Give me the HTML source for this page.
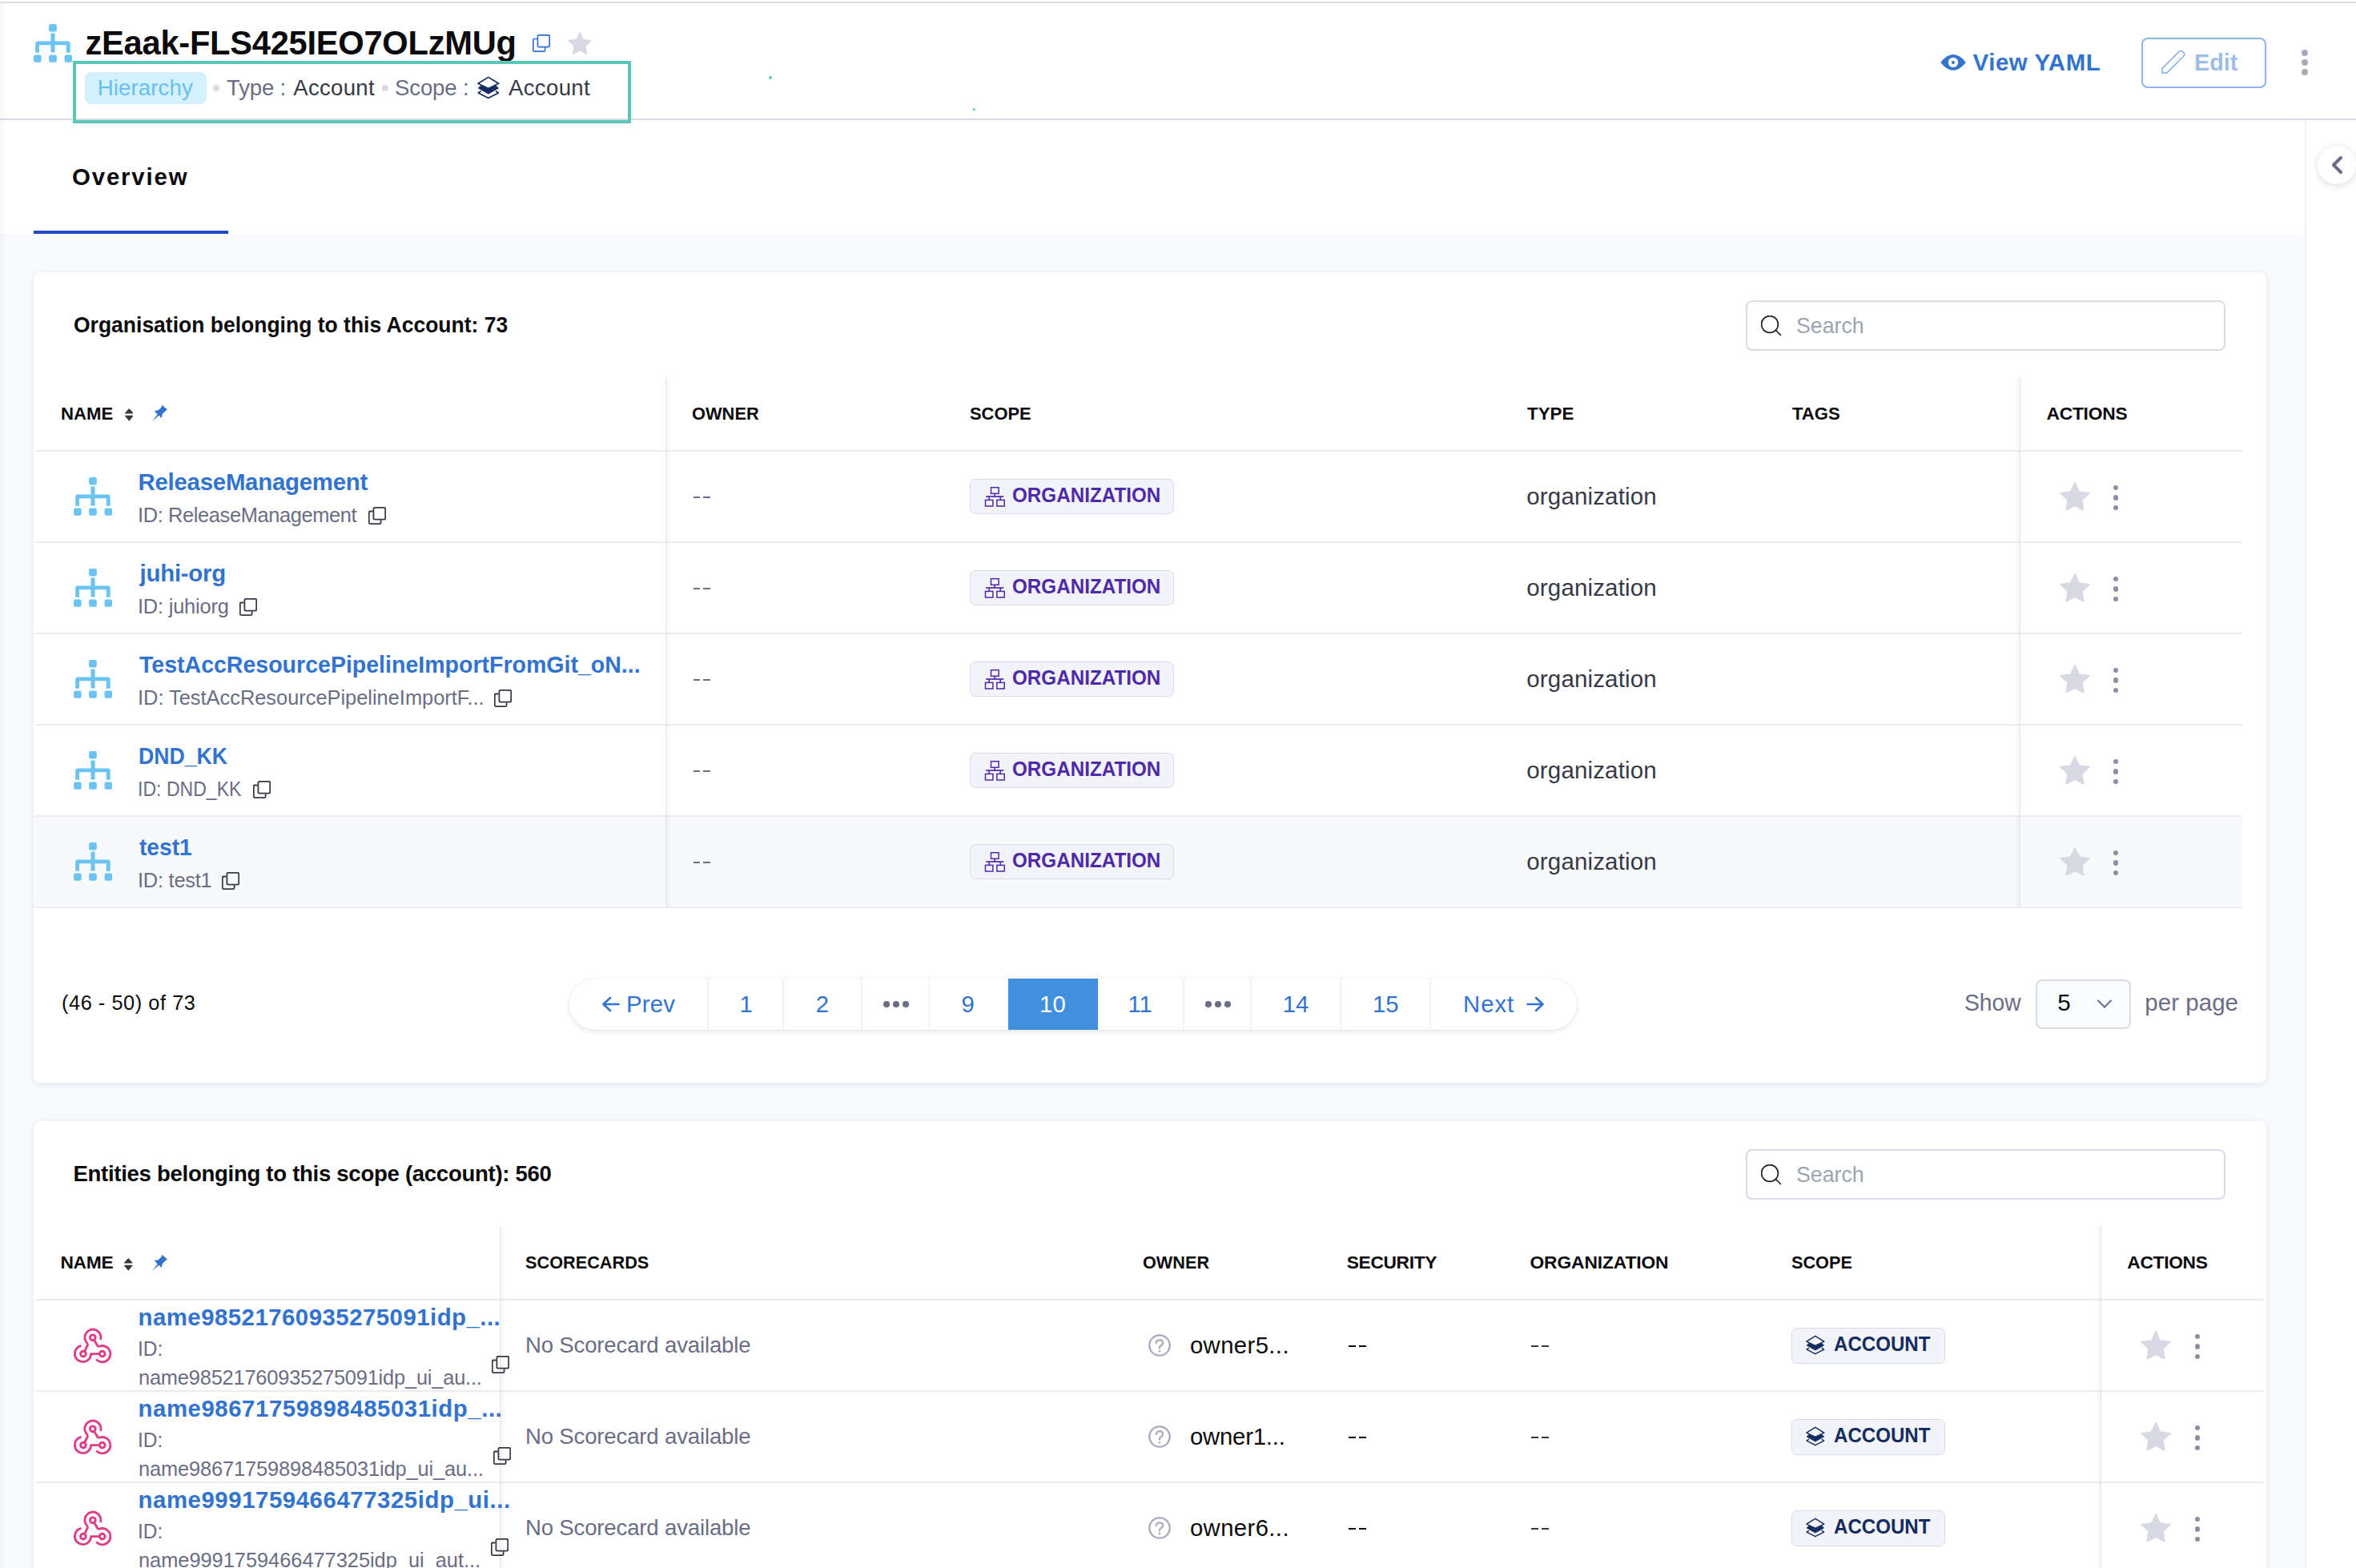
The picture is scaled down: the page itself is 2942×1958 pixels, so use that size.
<!DOCTYPE html>
<html><head><meta charset="utf-8"><title>Hierarchy</title>
<style>
html,body{margin:0;padding:0;}
body{width:2942px;height:1958px;overflow:hidden;position:relative;background:#fff;font-family:"Liberation Sans", sans-serif;}
.t{position:absolute;white-space:nowrap;line-height:1;font-family:"Liberation Sans", sans-serif;}
.r{position:absolute;display:block;}
</style></head><body>
<div class="r" style="left:0.00px;top:292.00px;width:2878.00px;height:1666.00px;background:#f9fafe"></div>
<div class="r" style="left:0.00px;top:2.00px;width:2942.00px;height:2.00px;background:#dddfdd"></div>
<div class="r" style="left:0.00px;top:148.00px;width:2942.00px;height:2.00px;background:#d9dae5"></div>
<div class="r" style="left:2878.00px;top:150.00px;width:1.50px;height:1808.00px;background:#efeff4"></div>
<div class="r" style="left:0.00px;top:4.00px;width:9.00px;height:1954.00px;background:linear-gradient(to right, rgba(40,41,61,0.03), rgba(40,41,61,0))"></div>
<svg class="r" style="left:42.00px;top:30.00px;" width="48.00" height="48.00" viewBox="0 0 48 48"><g fill="#6ac3f0"><rect x="19.1" y="0.1" width="9.7" height="9.4" rx="2"/><rect x="21.5" y="11.5" width="5" height="24"/><path d="M2.2 35.7V24.4q0-3 3-3H42.7q3 0 3 3V35.7H40.8V26.3H7V35.7Z"/><rect x="0.1" y="38.4" width="9.5" height="9.4" rx="2"/><rect x="19.1" y="38.4" width="9.7" height="9.4" rx="2"/><rect x="38.6" y="38.4" width="9.4" height="9.4" rx="2"/></g></svg>
<div id="t1" class="t" style="left:106.50px;top:32.50px;font-size:41.70px;color:#0b0b0d;font-weight:700;letter-spacing:-0.283px;">zEaak-FLS425IEO7OLzMUg</div>
<svg class="r" style="left:664.50px;top:42.80px;" width="22.00" height="22.00" viewBox="0 0 22 22"><g fill="none" stroke="#2f6fd0" stroke-width="1.70"><path d="M5.6 5.5H2.2q-1.4 0-1.4 1.4V19.7q0 1.4 1.4 1.4H14.2q1.4 0 1.4-1.4V16.2"/><rect x="6.4" y="0.8" width="14.8" height="14.8" rx="1.6"/></g></svg>
<svg class="r" style="left:709.00px;top:40.10px;" width="30.00" height="28.00" viewBox="0 0 30 28"><path fill="#d9d9e4" d="M15 0.2L19.3 9.3L29.5 10.7L22.1 17.8L23.9 28L15 23.2L6.1 28L7.9 17.8L0.5 10.7L10.7 9.3Z" stroke="#d9d9e4" stroke-width="1" stroke-linejoin="round"/></svg>
<div class="r" style="left:91.00px;top:76.00px;width:697.00px;height:78.00px;border:4px solid #5bc6b6;box-sizing:border-box"></div>
<div class="r" style="left:106.00px;top:90.00px;width:151.50px;height:39.50px;background:#d4f0fb;border-radius:8px"></div>
<div id="t2" class="t" style="left:121.80px;top:95.64px;font-size:27.60px;color:#66c1ef;letter-spacing:0.104px;">Hierarchy</div>
<div class="r" style="left:266.00px;top:106.00px;width:8.00px;height:8.00px;background:#d9dae5;border-radius:50%"></div>
<div id="t3" class="t" style="left:283.00px;top:95.64px;font-size:27.60px;color:#6b6d85;letter-spacing:-0.198px;">Type :</div>
<div id="t4" class="t" style="left:366.20px;top:95.64px;font-size:27.60px;color:#383946;letter-spacing:0.294px;">Account</div>
<div class="r" style="left:476.50px;top:106.00px;width:8.00px;height:8.00px;background:#d9dae5;border-radius:50%"></div>
<div id="t5" class="t" style="left:493.00px;top:95.64px;font-size:27.60px;color:#6b6d85;letter-spacing:-0.151px;">Scope :</div>
<svg class="r" style="left:596.00px;top:95.00px;" width="28.00" height="29.00" viewBox="0 0 28 29"><g fill="none" stroke="#142d60" stroke-width="1.70" stroke-linejoin="round"><path d="M13.8 1.4L1 9.3L13.8 15.6L26.6 9.3Z"/><path d="M4.6 18.8L1.3 21L13.8 27.5L26.4 21L23 18.8"/></g><path fill="#142d60" stroke="#142d60" stroke-width="1" stroke-linejoin="round" d="M1.3 15L4.9 11.8L13.8 15.9L22.8 11.8L26.4 15L13.8 22.2Z"/></svg>
<div id="t6" class="t" style="left:635.00px;top:95.64px;font-size:27.60px;color:#383946;letter-spacing:0.327px;">Account</div>
<div class="r" style="left:959.90px;top:95.20px;width:4.00px;height:4.00px;background:#5bc5b6;border-radius:50%"></div>
<div class="r" style="left:1214.60px;top:134.60px;width:3.40px;height:3.40px;background:#5bc5b6;border-radius:50%"></div>
<svg class="r" style="left:2423.00px;top:68.00px;" width="32.00" height="20.00" viewBox="0 0 32 20"><path fill="#3273d0" d="M0.3 10Q8 0 16 0Q24 0 31.8 10Q24 19.8 16 19.8Q8 19.8 0.3 10Z"/><circle cx="16" cy="10" r="6.2" fill="#fff"/><circle cx="16" cy="10" r="2" fill="#3273d0"/></svg>
<div id="t7" class="t" style="left:2463.60px;top:62.91px;font-size:29.40px;color:#3273d0;font-weight:700;letter-spacing:0.547px;">View YAML</div>
<div class="r" style="left:2673.50px;top:46.50px;width:156.00px;height:63.00px;border:2px solid #8db5e8;border-radius:8px;box-sizing:border-box"></div>
<svg class="r" style="left:2699.00px;top:63.00px;" width="30.00" height="30.00" viewBox="0 0 30 30"><path fill="none" stroke="#8db5e8" stroke-width="1.7" stroke-linejoin="round" d="M1 22.3L22.6 0.9Q24.2 -0.2 25.8 0.9L28.3 3.4Q29.3 5 28.3 6.5L6.8 28.2H1Z"/><path d="M14 16.5L23 7.5" stroke="#e3ecf8" stroke-width="1.2"/></svg>
<div id="t8" class="t" style="left:2739.52px;top:62.91px;font-size:29.40px;color:#9dbde8;font-weight:700;transform:scaleX(0.9777);transform-origin:0 0;">Edit</div>
<div class="r" style="left:2873.80px;top:61.80px;width:8.40px;height:8.40px;border-radius:50%;background:#a9a9bc"></div>
<div class="r" style="left:2873.80px;top:73.80px;width:8.40px;height:8.40px;border-radius:50%;background:#a9a9bc"></div>
<div class="r" style="left:2873.80px;top:85.80px;width:8.40px;height:8.40px;border-radius:50%;background:#a9a9bc"></div>
<div class="r" style="left:2893.60px;top:182.00px;width:48.00px;height:48.00px;background:#fff;border-radius:50%;box-shadow:0 2px 10px rgba(40,41,61,0.16)"></div>
<svg class="r" style="left:2908.00px;top:194.00px;" width="20.00" height="24.00" viewBox="0 0 20 24"><path d="M15 3L6 12L15 21" fill="none" stroke="#6b6d85" stroke-width="4" stroke-linecap="round" stroke-linejoin="round"/></svg>
<div id="t9" class="t" style="left:90.10px;top:206.01px;font-size:29.40px;color:#0b0b0d;font-weight:700;letter-spacing:1.822px;">Overview</div>
<div class="r" style="left:42.00px;top:288.00px;width:243.00px;height:4.00px;background:#1f48c4"></div>
<div class="r" style="left:42.00px;top:340.00px;width:2788.00px;height:1012.00px;background:#fff;border-radius:8px;box-shadow:0 0 1px rgba(40,41,61,0.06),0 2px 8px rgba(96,97,112,0.14)"></div>
<div id="t10" class="t" style="left:91.74px;top:391.54px;font-size:27.60px;color:#0b0b0d;font-weight:700;transform:scaleX(0.9602);transform-origin:0 0;">Organisation belonging to this Account: 73</div>
<div class="r" style="left:2180.00px;top:374.50px;width:599.00px;height:63.00px;border:2px solid #d9dae5;border-radius:8px;box-sizing:border-box;background:#fff"></div>
<svg class="r" style="left:2199.40px;top:393.50px;" width="26.00" height="26.00" viewBox="0 0 26 26"><circle cx="11" cy="11" r="10.4" fill="none" stroke="#22222a" stroke-width="1.7"/><path d="M18.5 18.5L24.5 24.5" stroke="#22222a" stroke-width="1.7" stroke-linecap="round"/></svg>
<div id="t11" class="t" style="left:2242.52px;top:392.71px;font-size:27.40px;color:#9ba5b2;transform:scaleX(0.9757);transform-origin:0 0;">Search</div>
<div id="t12" class="t" style="left:76.33px;top:504.60px;font-size:22.80px;color:#0b0b0d;font-weight:700;transform:scaleX(0.9709);transform-origin:0 0;">NAME</div>
<svg class="r" style="left:155.50px;top:510.00px;" width="10.50" height="16.00" viewBox="0 0 10.5 16"><path fill="#383946" d="M5.25 0.8L9.8 6H0.7Z M0.7 9.4H9.8L5.25 14.8Z" stroke="#383946" stroke-width="1.2" stroke-linejoin="round"/></svg>
<svg class="r" style="left:190.00px;top:505.00px;" width="20.00" height="22.00" viewBox="0 0 20 22"><path fill="#3273d0" d="M12.3 0.8L19 6.6L16.3 8.4L12.8 12.1L11.7 17L8.4 13.8L0.2 20.9L6.6 12.4L2.8 8.1L7.8 7.2L11.5 3.5Z"/></svg>
<div id="t13" class="t" style="left:864.30px;top:504.60px;font-size:22.80px;color:#0b0b0d;font-weight:700;transform:scaleX(0.9584);transform-origin:0 0;">OWNER</div>
<div id="t14" class="t" style="left:1211.00px;top:504.60px;font-size:22.80px;color:#0b0b0d;font-weight:700;transform:scaleX(0.9610);transform-origin:0 0;">SCOPE</div>
<div id="t15" class="t" style="left:1906.50px;top:504.60px;font-size:22.80px;color:#0b0b0d;font-weight:700;transform:scaleX(0.9792);transform-origin:0 0;">TYPE</div>
<div id="t16" class="t" style="left:2237.50px;top:504.60px;font-size:22.80px;color:#0b0b0d;font-weight:700;transform:scaleX(0.9686);transform-origin:0 0;">TAGS</div>
<div id="t17" class="t" style="left:2555.40px;top:504.60px;font-size:22.80px;color:#0b0b0d;font-weight:700;letter-spacing:-0.213px;">ACTIONS</div>
<div class="r" style="left:42.00px;top:1019.00px;width:2758.00px;height:114.00px;background:#f8f9fb"></div>
<div class="r" style="left:43.50px;top:561.70px;width:2756.50px;height:2.40px;background:#ececf3"></div>
<div class="r" style="left:43.50px;top:675.70px;width:2756.50px;height:2.40px;background:#ececf3"></div>
<div class="r" style="left:43.50px;top:789.70px;width:2756.50px;height:2.40px;background:#ececf3"></div>
<div class="r" style="left:43.50px;top:903.70px;width:2756.50px;height:2.40px;background:#ececf3"></div>
<div class="r" style="left:43.50px;top:1017.70px;width:2756.50px;height:2.40px;background:#ececf3"></div>
<div class="r" style="left:43.50px;top:1131.70px;width:2756.50px;height:2.40px;background:#ececf3"></div>
<div class="r" style="left:831.00px;top:470.50px;width:1.20px;height:662.50px;background:#e5e5ec"></div>
<div class="r" style="left:832.20px;top:470.50px;width:5.80px;height:662.50px;background:linear-gradient(to right, rgba(40,41,61,0.05), rgba(40,41,61,0))"></div>
<div class="r" style="left:2522.00px;top:470.50px;width:1.20px;height:662.50px;background:#e5e5ec"></div>
<div class="r" style="left:2516.00px;top:470.50px;width:6.00px;height:662.50px;background:linear-gradient(to left, rgba(40,41,61,0.05), rgba(40,41,61,0))"></div>
<svg class="r" style="left:92.00px;top:596.00px;" width="48.00" height="48.00" viewBox="0 0 48 48"><g fill="#6ac3f0"><rect x="19.1" y="0.1" width="9.7" height="9.4" rx="2"/><rect x="21.5" y="11.5" width="5" height="24"/><path d="M2.2 35.7V24.4q0-3 3-3H42.7q3 0 3 3V35.7H40.8V26.3H7V35.7Z"/><rect x="0.1" y="38.4" width="9.5" height="9.4" rx="2"/><rect x="19.1" y="38.4" width="9.7" height="9.4" rx="2"/><rect x="38.6" y="38.4" width="9.4" height="9.4" rx="2"/></g></svg>
<div id="t18" class="t" style="left:172.50px;top:586.91px;font-size:29.40px;color:#3273d0;font-weight:700;letter-spacing:-0.249px;">ReleaseManagement</div>
<div id="t19" class="t" style="left:172.00px;top:630.50px;font-size:25.40px;color:#6b6d85;letter-spacing:-0.365px;">ID: ReleaseManagement</div>
<svg class="r" style="left:460.00px;top:632.50px;" width="22.00" height="22.00" viewBox="0 0 22 22"><g fill="none" stroke="#383946" stroke-width="1.80"><path d="M5.6 5.5H2.2q-1.4 0-1.4 1.4V19.7q0 1.4 1.4 1.4H14.2q1.4 0 1.4-1.4V16.2"/><rect x="6.4" y="0.8" width="14.8" height="14.8" rx="1.6"/></g></svg>
<div class="r" style="left:865.70px;top:620.00px;width:8.30px;height:2.00px;background:#6b6d85"></div>
<div class="r" style="left:878.20px;top:620.00px;width:8.70px;height:2.00px;background:#6b6d85"></div>
<div class="r" style="left:1211.00px;top:597.50px;width:255.00px;height:44.50px;background:#f3f3fa;border:1.5px solid #d9dae5;border-radius:7px;box-sizing:border-box"></div>
<svg class="r" style="left:1229.00px;top:607.00px;" width="26.00" height="26.00" viewBox="0 0 26 26"><g fill="none" stroke="#4f2aa8" stroke-width="1.5"><rect x="8.5" y="1.7" width="9.6" height="7.6"/><rect x="1.5" y="17.4" width="9.4" height="7.6"/><rect x="15.8" y="17.4" width="9.4" height="7.6"/></g><g fill="#4f2aa8"><rect x="12.3" y="9" width="1.6" height="4"/><rect x="2.2" y="12.2" width="22" height="1.7"/><rect x="5.3" y="13" width="1.6" height="4.5"/><rect x="19.4" y="13" width="1.6" height="4.5"/></g></svg>
<div id="t20" class="t" style="left:1263.94px;top:606.38px;font-size:25.30px;color:#4f2aa8;font-weight:700;transform:scaleX(0.9577);transform-origin:0 0;">ORGANIZATION</div>
<div id="t21" class="t" style="left:1906.30px;top:604.83px;font-size:29.50px;color:#383946;letter-spacing:0.153px;">organization</div>
<svg class="r" style="left:2571.60px;top:602.00px;" width="38.00" height="35.47" viewBox="0 0 30 28"><path fill="#d9d9e5" d="M15 0.2L19.3 9.3L29.5 10.7L22.1 17.8L23.9 28L15 23.2L6.1 28L7.9 17.8L0.5 10.7L10.7 9.3Z" stroke="#d9d9e5" stroke-width="1" stroke-linejoin="round"/></svg>
<div class="r" style="left:2639.30px;top:606.30px;width:6.20px;height:6.20px;border-radius:50%;background:#8c8ea6"></div>
<div class="r" style="left:2639.30px;top:618.40px;width:6.20px;height:6.20px;border-radius:50%;background:#8c8ea6"></div>
<div class="r" style="left:2639.30px;top:630.50px;width:6.20px;height:6.20px;border-radius:50%;background:#8c8ea6"></div>
<svg class="r" style="left:92.00px;top:710.00px;" width="48.00" height="48.00" viewBox="0 0 48 48"><g fill="#6ac3f0"><rect x="19.1" y="0.1" width="9.7" height="9.4" rx="2"/><rect x="21.5" y="11.5" width="5" height="24"/><path d="M2.2 35.7V24.4q0-3 3-3H42.7q3 0 3 3V35.7H40.8V26.3H7V35.7Z"/><rect x="0.1" y="38.4" width="9.5" height="9.4" rx="2"/><rect x="19.1" y="38.4" width="9.7" height="9.4" rx="2"/><rect x="38.6" y="38.4" width="9.4" height="9.4" rx="2"/></g></svg>
<div id="t22" class="t" style="left:174.50px;top:700.91px;font-size:29.40px;color:#3273d0;font-weight:700;letter-spacing:-0.231px;">juhi-org</div>
<div id="t23" class="t" style="left:172.00px;top:744.50px;font-size:25.40px;color:#6b6d85;letter-spacing:-0.190px;">ID: juhiorg</div>
<svg class="r" style="left:298.90px;top:746.50px;" width="22.00" height="22.00" viewBox="0 0 22 22"><g fill="none" stroke="#383946" stroke-width="1.80"><path d="M5.6 5.5H2.2q-1.4 0-1.4 1.4V19.7q0 1.4 1.4 1.4H14.2q1.4 0 1.4-1.4V16.2"/><rect x="6.4" y="0.8" width="14.8" height="14.8" rx="1.6"/></g></svg>
<div class="r" style="left:865.70px;top:734.00px;width:8.30px;height:2.00px;background:#6b6d85"></div>
<div class="r" style="left:878.20px;top:734.00px;width:8.70px;height:2.00px;background:#6b6d85"></div>
<div class="r" style="left:1211.00px;top:711.50px;width:255.00px;height:44.50px;background:#f3f3fa;border:1.5px solid #d9dae5;border-radius:7px;box-sizing:border-box"></div>
<svg class="r" style="left:1229.00px;top:721.00px;" width="26.00" height="26.00" viewBox="0 0 26 26"><g fill="none" stroke="#4f2aa8" stroke-width="1.5"><rect x="8.5" y="1.7" width="9.6" height="7.6"/><rect x="1.5" y="17.4" width="9.4" height="7.6"/><rect x="15.8" y="17.4" width="9.4" height="7.6"/></g><g fill="#4f2aa8"><rect x="12.3" y="9" width="1.6" height="4"/><rect x="2.2" y="12.2" width="22" height="1.7"/><rect x="5.3" y="13" width="1.6" height="4.5"/><rect x="19.4" y="13" width="1.6" height="4.5"/></g></svg>
<div id="t24" class="t" style="left:1263.94px;top:720.38px;font-size:25.30px;color:#4f2aa8;font-weight:700;transform:scaleX(0.9577);transform-origin:0 0;">ORGANIZATION</div>
<div id="t25" class="t" style="left:1906.30px;top:718.83px;font-size:29.50px;color:#383946;letter-spacing:0.153px;">organization</div>
<svg class="r" style="left:2571.60px;top:716.00px;" width="38.00" height="35.47" viewBox="0 0 30 28"><path fill="#d9d9e5" d="M15 0.2L19.3 9.3L29.5 10.7L22.1 17.8L23.9 28L15 23.2L6.1 28L7.9 17.8L0.5 10.7L10.7 9.3Z" stroke="#d9d9e5" stroke-width="1" stroke-linejoin="round"/></svg>
<div class="r" style="left:2639.30px;top:720.30px;width:6.20px;height:6.20px;border-radius:50%;background:#8c8ea6"></div>
<div class="r" style="left:2639.30px;top:732.40px;width:6.20px;height:6.20px;border-radius:50%;background:#8c8ea6"></div>
<div class="r" style="left:2639.30px;top:744.50px;width:6.20px;height:6.20px;border-radius:50%;background:#8c8ea6"></div>
<svg class="r" style="left:92.00px;top:824.00px;" width="48.00" height="48.00" viewBox="0 0 48 48"><g fill="#6ac3f0"><rect x="19.1" y="0.1" width="9.7" height="9.4" rx="2"/><rect x="21.5" y="11.5" width="5" height="24"/><path d="M2.2 35.7V24.4q0-3 3-3H42.7q3 0 3 3V35.7H40.8V26.3H7V35.7Z"/><rect x="0.1" y="38.4" width="9.5" height="9.4" rx="2"/><rect x="19.1" y="38.4" width="9.7" height="9.4" rx="2"/><rect x="38.6" y="38.4" width="9.4" height="9.4" rx="2"/></g></svg>
<div id="t26" class="t" style="left:173.50px;top:814.91px;font-size:29.40px;color:#3273d0;font-weight:700;transform:scaleX(0.9706);transform-origin:0 0;">TestAccResourcePipelineImportFromGit_oN...</div>
<div id="t27" class="t" style="left:172.00px;top:858.50px;font-size:25.40px;color:#6b6d85;letter-spacing:-0.004px;">ID: TestAccResourcePipelineImportF...</div>
<svg class="r" style="left:616.70px;top:860.50px;" width="22.00" height="22.00" viewBox="0 0 22 22"><g fill="none" stroke="#383946" stroke-width="1.80"><path d="M5.6 5.5H2.2q-1.4 0-1.4 1.4V19.7q0 1.4 1.4 1.4H14.2q1.4 0 1.4-1.4V16.2"/><rect x="6.4" y="0.8" width="14.8" height="14.8" rx="1.6"/></g></svg>
<div class="r" style="left:865.70px;top:848.00px;width:8.30px;height:2.00px;background:#6b6d85"></div>
<div class="r" style="left:878.20px;top:848.00px;width:8.70px;height:2.00px;background:#6b6d85"></div>
<div class="r" style="left:1211.00px;top:825.50px;width:255.00px;height:44.50px;background:#f3f3fa;border:1.5px solid #d9dae5;border-radius:7px;box-sizing:border-box"></div>
<svg class="r" style="left:1229.00px;top:835.00px;" width="26.00" height="26.00" viewBox="0 0 26 26"><g fill="none" stroke="#4f2aa8" stroke-width="1.5"><rect x="8.5" y="1.7" width="9.6" height="7.6"/><rect x="1.5" y="17.4" width="9.4" height="7.6"/><rect x="15.8" y="17.4" width="9.4" height="7.6"/></g><g fill="#4f2aa8"><rect x="12.3" y="9" width="1.6" height="4"/><rect x="2.2" y="12.2" width="22" height="1.7"/><rect x="5.3" y="13" width="1.6" height="4.5"/><rect x="19.4" y="13" width="1.6" height="4.5"/></g></svg>
<div id="t28" class="t" style="left:1263.94px;top:834.38px;font-size:25.30px;color:#4f2aa8;font-weight:700;transform:scaleX(0.9577);transform-origin:0 0;">ORGANIZATION</div>
<div id="t29" class="t" style="left:1906.30px;top:832.83px;font-size:29.50px;color:#383946;letter-spacing:0.153px;">organization</div>
<svg class="r" style="left:2571.60px;top:830.00px;" width="38.00" height="35.47" viewBox="0 0 30 28"><path fill="#d9d9e5" d="M15 0.2L19.3 9.3L29.5 10.7L22.1 17.8L23.9 28L15 23.2L6.1 28L7.9 17.8L0.5 10.7L10.7 9.3Z" stroke="#d9d9e5" stroke-width="1" stroke-linejoin="round"/></svg>
<div class="r" style="left:2639.30px;top:834.30px;width:6.20px;height:6.20px;border-radius:50%;background:#8c8ea6"></div>
<div class="r" style="left:2639.30px;top:846.40px;width:6.20px;height:6.20px;border-radius:50%;background:#8c8ea6"></div>
<div class="r" style="left:2639.30px;top:858.50px;width:6.20px;height:6.20px;border-radius:50%;background:#8c8ea6"></div>
<svg class="r" style="left:92.00px;top:938.00px;" width="48.00" height="48.00" viewBox="0 0 48 48"><g fill="#6ac3f0"><rect x="19.1" y="0.1" width="9.7" height="9.4" rx="2"/><rect x="21.5" y="11.5" width="5" height="24"/><path d="M2.2 35.7V24.4q0-3 3-3H42.7q3 0 3 3V35.7H40.8V26.3H7V35.7Z"/><rect x="0.1" y="38.4" width="9.5" height="9.4" rx="2"/><rect x="19.1" y="38.4" width="9.7" height="9.4" rx="2"/><rect x="38.6" y="38.4" width="9.4" height="9.4" rx="2"/></g></svg>
<div id="t30" class="t" style="left:172.59px;top:928.91px;font-size:29.40px;color:#3273d0;font-weight:700;transform:scaleX(0.9064);transform-origin:0 0;">DND_KK</div>
<div id="t31" class="t" style="left:172.18px;top:972.50px;font-size:25.40px;color:#6b6d85;transform:scaleX(0.9085);transform-origin:0 0;">ID: DND_KK</div>
<svg class="r" style="left:316.30px;top:974.50px;" width="22.00" height="22.00" viewBox="0 0 22 22"><g fill="none" stroke="#383946" stroke-width="1.80"><path d="M5.6 5.5H2.2q-1.4 0-1.4 1.4V19.7q0 1.4 1.4 1.4H14.2q1.4 0 1.4-1.4V16.2"/><rect x="6.4" y="0.8" width="14.8" height="14.8" rx="1.6"/></g></svg>
<div class="r" style="left:865.70px;top:962.00px;width:8.30px;height:2.00px;background:#6b6d85"></div>
<div class="r" style="left:878.20px;top:962.00px;width:8.70px;height:2.00px;background:#6b6d85"></div>
<div class="r" style="left:1211.00px;top:939.50px;width:255.00px;height:44.50px;background:#f3f3fa;border:1.5px solid #d9dae5;border-radius:7px;box-sizing:border-box"></div>
<svg class="r" style="left:1229.00px;top:949.00px;" width="26.00" height="26.00" viewBox="0 0 26 26"><g fill="none" stroke="#4f2aa8" stroke-width="1.5"><rect x="8.5" y="1.7" width="9.6" height="7.6"/><rect x="1.5" y="17.4" width="9.4" height="7.6"/><rect x="15.8" y="17.4" width="9.4" height="7.6"/></g><g fill="#4f2aa8"><rect x="12.3" y="9" width="1.6" height="4"/><rect x="2.2" y="12.2" width="22" height="1.7"/><rect x="5.3" y="13" width="1.6" height="4.5"/><rect x="19.4" y="13" width="1.6" height="4.5"/></g></svg>
<div id="t32" class="t" style="left:1263.94px;top:948.38px;font-size:25.30px;color:#4f2aa8;font-weight:700;transform:scaleX(0.9577);transform-origin:0 0;">ORGANIZATION</div>
<div id="t33" class="t" style="left:1906.30px;top:946.83px;font-size:29.50px;color:#383946;letter-spacing:0.153px;">organization</div>
<svg class="r" style="left:2571.60px;top:944.00px;" width="38.00" height="35.47" viewBox="0 0 30 28"><path fill="#d9d9e5" d="M15 0.2L19.3 9.3L29.5 10.7L22.1 17.8L23.9 28L15 23.2L6.1 28L7.9 17.8L0.5 10.7L10.7 9.3Z" stroke="#d9d9e5" stroke-width="1" stroke-linejoin="round"/></svg>
<div class="r" style="left:2639.30px;top:948.30px;width:6.20px;height:6.20px;border-radius:50%;background:#8c8ea6"></div>
<div class="r" style="left:2639.30px;top:960.40px;width:6.20px;height:6.20px;border-radius:50%;background:#8c8ea6"></div>
<div class="r" style="left:2639.30px;top:972.50px;width:6.20px;height:6.20px;border-radius:50%;background:#8c8ea6"></div>
<svg class="r" style="left:92.00px;top:1052.00px;" width="48.00" height="48.00" viewBox="0 0 48 48"><g fill="#6ac3f0"><rect x="19.1" y="0.1" width="9.7" height="9.4" rx="2"/><rect x="21.5" y="11.5" width="5" height="24"/><path d="M2.2 35.7V24.4q0-3 3-3H42.7q3 0 3 3V35.7H40.8V26.3H7V35.7Z"/><rect x="0.1" y="38.4" width="9.5" height="9.4" rx="2"/><rect x="19.1" y="38.4" width="9.7" height="9.4" rx="2"/><rect x="38.6" y="38.4" width="9.4" height="9.4" rx="2"/></g></svg>
<div id="t34" class="t" style="left:173.50px;top:1042.91px;font-size:29.40px;color:#3273d0;font-weight:700;transform:scaleX(0.9566);transform-origin:0 0;">test1</div>
<div id="t35" class="t" style="left:172.00px;top:1086.50px;font-size:25.40px;color:#6b6d85;letter-spacing:-0.228px;">ID: test1</div>
<svg class="r" style="left:276.90px;top:1088.50px;" width="22.00" height="22.00" viewBox="0 0 22 22"><g fill="none" stroke="#383946" stroke-width="1.80"><path d="M5.6 5.5H2.2q-1.4 0-1.4 1.4V19.7q0 1.4 1.4 1.4H14.2q1.4 0 1.4-1.4V16.2"/><rect x="6.4" y="0.8" width="14.8" height="14.8" rx="1.6"/></g></svg>
<div class="r" style="left:865.70px;top:1076.00px;width:8.30px;height:2.00px;background:#6b6d85"></div>
<div class="r" style="left:878.20px;top:1076.00px;width:8.70px;height:2.00px;background:#6b6d85"></div>
<div class="r" style="left:1211.00px;top:1053.50px;width:255.00px;height:44.50px;background:#f3f3fa;border:1.5px solid #d9dae5;border-radius:7px;box-sizing:border-box"></div>
<svg class="r" style="left:1229.00px;top:1063.00px;" width="26.00" height="26.00" viewBox="0 0 26 26"><g fill="none" stroke="#4f2aa8" stroke-width="1.5"><rect x="8.5" y="1.7" width="9.6" height="7.6"/><rect x="1.5" y="17.4" width="9.4" height="7.6"/><rect x="15.8" y="17.4" width="9.4" height="7.6"/></g><g fill="#4f2aa8"><rect x="12.3" y="9" width="1.6" height="4"/><rect x="2.2" y="12.2" width="22" height="1.7"/><rect x="5.3" y="13" width="1.6" height="4.5"/><rect x="19.4" y="13" width="1.6" height="4.5"/></g></svg>
<div id="t36" class="t" style="left:1263.94px;top:1062.38px;font-size:25.30px;color:#4f2aa8;font-weight:700;transform:scaleX(0.9577);transform-origin:0 0;">ORGANIZATION</div>
<div id="t37" class="t" style="left:1906.30px;top:1060.83px;font-size:29.50px;color:#383946;letter-spacing:0.153px;">organization</div>
<svg class="r" style="left:2571.60px;top:1058.00px;" width="38.00" height="35.47" viewBox="0 0 30 28"><path fill="#d9d9e5" d="M15 0.2L19.3 9.3L29.5 10.7L22.1 17.8L23.9 28L15 23.2L6.1 28L7.9 17.8L0.5 10.7L10.7 9.3Z" stroke="#d9d9e5" stroke-width="1" stroke-linejoin="round"/></svg>
<div class="r" style="left:2639.30px;top:1062.30px;width:6.20px;height:6.20px;border-radius:50%;background:#8c8ea6"></div>
<div class="r" style="left:2639.30px;top:1074.40px;width:6.20px;height:6.20px;border-radius:50%;background:#8c8ea6"></div>
<div class="r" style="left:2639.30px;top:1086.50px;width:6.20px;height:6.20px;border-radius:50%;background:#8c8ea6"></div>
<div id="t38" class="t" style="left:77.00px;top:1240.28px;font-size:25.30px;color:#0b0b0d;letter-spacing:0.569px;">(46 - 50) of 73</div>
<div class="r" style="left:711.00px;top:1221.70px;width:1258.40px;height:63.90px;background:#fff;border-radius:32px;box-shadow:0 0 2px rgba(40,41,61,0.08),0 2px 6px rgba(96,97,112,0.16);overflow:hidden"></div>
<div class="r" style="left:1259.10px;top:1221.70px;width:111.70px;height:63.90px;background:#4190dd"></div>
<div class="r" style="left:880.70px;top:1221.70px;width:3.00px;height:63.90px;background:linear-gradient(to right, rgba(40,41,61,0), rgba(40,41,61,0.03))"></div>
<div class="r" style="left:883.70px;top:1221.70px;width:1.20px;height:63.90px;background:#eeeef3"></div>
<div class="r" style="left:974.90px;top:1221.70px;width:3.00px;height:63.90px;background:linear-gradient(to right, rgba(40,41,61,0), rgba(40,41,61,0.03))"></div>
<div class="r" style="left:977.90px;top:1221.70px;width:1.20px;height:63.90px;background:#eeeef3"></div>
<div class="r" style="left:1073.20px;top:1221.70px;width:3.00px;height:63.90px;background:linear-gradient(to right, rgba(40,41,61,0), rgba(40,41,61,0.03))"></div>
<div class="r" style="left:1076.20px;top:1221.70px;width:1.20px;height:63.90px;background:#eeeef3"></div>
<div class="r" style="left:1157.00px;top:1221.70px;width:3.00px;height:63.90px;background:linear-gradient(to right, rgba(40,41,61,0), rgba(40,41,61,0.03))"></div>
<div class="r" style="left:1160.00px;top:1221.70px;width:1.20px;height:63.90px;background:#eeeef3"></div>
<div class="r" style="left:1475.10px;top:1221.70px;width:3.00px;height:63.90px;background:linear-gradient(to right, rgba(40,41,61,0), rgba(40,41,61,0.03))"></div>
<div class="r" style="left:1478.10px;top:1221.70px;width:1.20px;height:63.90px;background:#eeeef3"></div>
<div class="r" style="left:1558.90px;top:1221.70px;width:3.00px;height:63.90px;background:linear-gradient(to right, rgba(40,41,61,0), rgba(40,41,61,0.03))"></div>
<div class="r" style="left:1561.90px;top:1221.70px;width:1.20px;height:63.90px;background:#eeeef3"></div>
<div class="r" style="left:1670.90px;top:1221.70px;width:3.00px;height:63.90px;background:linear-gradient(to right, rgba(40,41,61,0), rgba(40,41,61,0.03))"></div>
<div class="r" style="left:1673.90px;top:1221.70px;width:1.20px;height:63.90px;background:#eeeef3"></div>
<div class="r" style="left:1782.60px;top:1221.70px;width:3.00px;height:63.90px;background:linear-gradient(to right, rgba(40,41,61,0), rgba(40,41,61,0.03))"></div>
<div class="r" style="left:1785.60px;top:1221.70px;width:1.20px;height:63.90px;background:#eeeef3"></div>
<svg class="r" style="left:751.00px;top:1244.00px;" width="23.00" height="20.00" viewBox="0 0 23 20"><path d="M21.5 10H3M11 2L2.5 10L11 18" fill="none" stroke="#3273d0" stroke-width="2.6" stroke-linecap="round" stroke-linejoin="round"/></svg>
<div id="t39" class="t" style="left:782.00px;top:1239.10px;font-size:29.30px;color:#3273d0;letter-spacing:0.203px;">Prev</div>
<div class="t" style="left:831.70px;width:200px;text-align:center;top:1239.10px;font-size:29.3px;color:#3273d0">1</div>
<div class="t" style="left:926.80px;width:200px;text-align:center;top:1239.10px;font-size:29.3px;color:#3273d0">2</div>
<div class="t" style="left:1108.60px;width:200px;text-align:center;top:1239.10px;font-size:29.3px;color:#3273d0">9</div>
<div class="t" style="left:1214.40px;width:200px;text-align:center;top:1239.10px;font-size:29.3px;color:#ffffff">10</div>
<div class="t" style="left:1323.70px;width:200px;text-align:center;top:1239.10px;font-size:29.3px;color:#3273d0">11</div>
<div class="t" style="left:1518.00px;width:200px;text-align:center;top:1239.10px;font-size:29.3px;color:#3273d0">14</div>
<div class="t" style="left:1630.30px;width:200px;text-align:center;top:1239.10px;font-size:29.3px;color:#3273d0">15</div>
<div class="r" style="left:1103.20px;top:1250.20px;width:7.60px;height:7.60px;background:#6b6d85;border-radius:50%"></div>
<div class="r" style="left:1115.20px;top:1250.20px;width:7.60px;height:7.60px;background:#6b6d85;border-radius:50%"></div>
<div class="r" style="left:1127.20px;top:1250.20px;width:7.60px;height:7.60px;background:#6b6d85;border-radius:50%"></div>
<div class="r" style="left:1505.00px;top:1250.20px;width:7.60px;height:7.60px;background:#6b6d85;border-radius:50%"></div>
<div class="r" style="left:1517.00px;top:1250.20px;width:7.60px;height:7.60px;background:#6b6d85;border-radius:50%"></div>
<div class="r" style="left:1529.00px;top:1250.20px;width:7.60px;height:7.60px;background:#6b6d85;border-radius:50%"></div>
<div id="t40" class="t" style="left:1827.10px;top:1239.10px;font-size:29.30px;color:#3273d0;letter-spacing:0.934px;">Next</div>
<svg class="r" style="left:1906.00px;top:1244.00px;" width="23.00" height="20.00" viewBox="0 0 23 20"><path d="M1.5 10H20M12 2L20.5 10L12 18" fill="none" stroke="#3273d0" stroke-width="2.6" stroke-linecap="round" stroke-linejoin="round"/></svg>
<div id="t41" class="t" style="left:2453.34px;top:1237.13px;font-size:29.50px;color:#6b6d85;transform:scaleX(0.9566);transform-origin:0 0;">Show</div>
<div class="r" style="left:2542.30px;top:1222.50px;width:119.00px;height:62.50px;border:2px solid #d9dae5;border-radius:8px;box-sizing:border-box;background:#fafbfd"></div>
<div id="t42" class="t" style="left:2569.30px;top:1237.13px;font-size:29.50px;color:#0b0b0d;">5</div>
<svg class="r" style="left:2618.00px;top:1247.00px;" width="20.00" height="13.00" viewBox="0 0 20 13"><path d="M2 2.5L10 10.5L18 2.5" fill="none" stroke="#6b6d85" stroke-width="2" stroke-linecap="round"/></svg>
<div id="t43" class="t" style="left:2678.30px;top:1237.13px;font-size:29.50px;color:#6b6d85;letter-spacing:0.035px;">per page</div>
<div class="r" style="left:42.00px;top:1400.00px;width:2788.00px;height:700.00px;background:#fff;border-radius:8px;box-shadow:0 0 1px rgba(40,41,61,0.06),0 2px 8px rgba(96,97,112,0.14)"></div>
<div id="t44" class="t" style="left:91.40px;top:1452.44px;font-size:27.60px;color:#0b0b0d;font-weight:700;letter-spacing:-0.308px;">Entities belonging to this scope (account): 560</div>
<div class="r" style="left:2180.00px;top:1434.80px;width:599.00px;height:63.00px;border:2px solid #d9dae5;border-radius:8px;box-sizing:border-box;background:#fff"></div>
<svg class="r" style="left:2199.40px;top:1453.80px;" width="26.00" height="26.00" viewBox="0 0 26 26"><circle cx="11" cy="11" r="10.4" fill="none" stroke="#22222a" stroke-width="1.7"/><path d="M18.5 18.5L24.5 24.5" stroke="#22222a" stroke-width="1.7" stroke-linecap="round"/></svg>
<div id="t45" class="t" style="left:2242.52px;top:1453.01px;font-size:27.40px;color:#9ba5b2;transform:scaleX(0.9757);transform-origin:0 0;">Search</div>
<div id="t46" class="t" style="left:75.40px;top:1565.20px;font-size:22.80px;color:#0b0b0d;font-weight:700;letter-spacing:-0.305px;">NAME</div>
<svg class="r" style="left:155.40px;top:1570.50px;" width="10.50" height="16.00" viewBox="0 0 10.5 16"><path fill="#383946" d="M5.25 0.8L9.8 6H0.7Z M0.7 9.4H9.8L5.25 14.8Z" stroke="#383946" stroke-width="1.2" stroke-linejoin="round"/></svg>
<svg class="r" style="left:190.00px;top:1565.50px;" width="20.00" height="22.00" viewBox="0 0 20 22"><path fill="#3273d0" d="M12.3 0.8L19 6.6L16.3 8.4L12.8 12.1L11.7 17L8.4 13.8L0.2 20.9L6.6 12.4L2.8 8.1L7.8 7.2L11.5 3.5Z"/></svg>
<div id="t47" class="t" style="left:656.40px;top:1565.20px;font-size:22.80px;color:#0b0b0d;font-weight:700;transform:scaleX(0.9517);transform-origin:0 0;">SCORECARDS</div>
<div id="t48" class="t" style="left:1426.70px;top:1565.20px;font-size:22.80px;color:#0b0b0d;font-weight:700;transform:scaleX(0.9503);transform-origin:0 0;">OWNER</div>
<div id="t49" class="t" style="left:1681.80px;top:1565.20px;font-size:22.80px;color:#0b0b0d;font-weight:700;letter-spacing:-0.380px;">SECURITY</div>
<div id="t50" class="t" style="left:1910.50px;top:1565.20px;font-size:22.80px;color:#0b0b0d;font-weight:700;letter-spacing:-0.116px;">ORGANIZATION</div>
<div id="t51" class="t" style="left:2236.80px;top:1565.20px;font-size:22.80px;color:#0b0b0d;font-weight:700;transform:scaleX(0.9509);transform-origin:0 0;">SCOPE</div>
<div id="t52" class="t" style="left:2656.30px;top:1565.20px;font-size:22.80px;color:#0b0b0d;font-weight:700;letter-spacing:-0.330px;">ACTIONS</div>
<div class="r" style="left:43.50px;top:1621.70px;width:2784.50px;height:2.40px;background:#ececf3"></div>
<div class="r" style="left:43.50px;top:1735.70px;width:2784.50px;height:2.40px;background:#ececf3"></div>
<div class="r" style="left:43.50px;top:1849.70px;width:2784.50px;height:2.40px;background:#ececf3"></div>
<div class="r" style="left:43.50px;top:1963.70px;width:2784.50px;height:2.40px;background:#ececf3"></div>
<div class="r" style="left:623.60px;top:1531.50px;width:1.20px;height:426.50px;background:#e5e5ec"></div>
<div class="r" style="left:624.80px;top:1531.50px;width:5.80px;height:426.50px;background:linear-gradient(to right, rgba(40,41,61,0.05), rgba(40,41,61,0))"></div>
<div class="r" style="left:2623.00px;top:1531.50px;width:1.20px;height:426.50px;background:#e5e5ec"></div>
<div class="r" style="left:2617.00px;top:1531.50px;width:6.00px;height:426.50px;background:linear-gradient(to left, rgba(40,41,61,0.05), rgba(40,41,61,0))"></div>
<svg class="r" style="left:85.00px;top:1650.00px;" width="60.00" height="60.00" viewBox="0 0 60 60"><g fill="none" stroke="#de3d88" stroke-width="2.90" stroke-linecap="butt" stroke-linejoin="round"><circle cx="30.8" cy="20.3" r="3.4"/><circle cx="18.9" cy="40.6" r="3.4"/><circle cx="42.7" cy="40.6" r="3.4"/><path d="M24.9 28.3A10.1 10.1 0 1 1 40.6 23"/><path d="M16.5 30.4A10.2 10.2 0 1 0 28.7 40.6H39.3"/><path d="M37.7 31.8A10.2 10.2 0 1 1 35.2 47.6"/><path d="M32.5 23.3L37.7 31.8"/><path d="M24.9 28.3L20.6 37.6"/></g></svg>
<div id="t53" class="t" style="left:172.50px;top:1629.51px;font-size:29.40px;color:#3273d0;font-weight:700;letter-spacing:0.470px;">name98521760935275091idp_...</div>
<div id="t54" class="t" style="left:172.07px;top:1672.10px;font-size:25.40px;color:#6b6d85;transform:scaleX(0.9651);transform-origin:0 0;">ID:</div>
<div id="t55" class="t" style="left:173.00px;top:1708.30px;font-size:25.40px;color:#6b6d85;letter-spacing:-0.188px;">name98521760935275091idp_ui_au...</div>
<svg class="r" style="left:613.80px;top:1693.00px;" width="22.00" height="22.00" viewBox="0 0 22 22"><g fill="none" stroke="#383946" stroke-width="1.80"><path d="M5.6 5.5H2.2q-1.4 0-1.4 1.4V19.7q0 1.4 1.4 1.4H14.2q1.4 0 1.4-1.4V16.2"/><rect x="6.4" y="0.8" width="14.8" height="14.8" rx="1.6"/></g></svg>
<div id="t56" class="t" style="left:655.90px;top:1665.64px;font-size:27.60px;color:#6b6d85;letter-spacing:-0.173px;">No Scorecard available</div>
<svg class="r" style="left:1433.70px;top:1666.00px;" width="28.00" height="28.00" viewBox="0 0 28 28"><circle cx="14" cy="14" r="12.7" fill="none" stroke="#aaaabf" stroke-width="2.3"/><path d="M9.6 11q0.6-3.7 4.6-3.7q3.9 0 3.9 3.5q0 2.4-2.6 3.6q-1.6 0.8-1.6 2.8v0.6" fill="none" stroke="#aaaabf" stroke-width="2.2" stroke-linecap="round"/><circle cx="14" cy="21.3" r="1.3" fill="#aaaabf"/></svg>
<div id="t57" class="t" style="left:1485.90px;top:1665.00px;font-size:29.30px;color:#0b0b0d;letter-spacing:0.392px;">owner5...</div>
<div class="r" style="left:1684.00px;top:1680.20px;width:8.80px;height:2.20px;background:#0b0b0d"></div>
<div class="r" style="left:1697.10px;top:1680.20px;width:8.80px;height:2.20px;background:#0b0b0d"></div>
<div class="r" style="left:1912.20px;top:1680.20px;width:8.80px;height:2.20px;background:#383946"></div>
<div class="r" style="left:1924.90px;top:1680.20px;width:8.90px;height:2.20px;background:#383946"></div>
<div class="r" style="left:2236.80px;top:1657.50px;width:191.90px;height:45.00px;background:#f3f3fa;border:1.5px solid #d9dae5;border-radius:7px;box-sizing:border-box"></div>
<svg class="r" style="left:2254.50px;top:1667.00px;" width="24.00" height="25.00" viewBox="0 0 28 29"><g fill="none" stroke="#142d60" stroke-width="1.70" stroke-linejoin="round"><path d="M13.8 1.4L1 9.3L13.8 15.6L26.6 9.3Z"/><path d="M4.6 18.8L1.3 21L13.8 27.5L26.4 21L23 18.8"/></g><path fill="#142d60" stroke="#142d60" stroke-width="1" stroke-linejoin="round" d="M1.3 15L4.9 11.8L13.8 15.9L22.8 11.8L26.4 15L13.8 22.2Z"/></svg>
<div id="t58" class="t" style="left:2290.00px;top:1666.38px;font-size:25.30px;color:#142d60;font-weight:700;transform:scaleX(0.9526);transform-origin:0 0;">ACCOUNT</div>
<svg class="r" style="left:2672.80px;top:1662.00px;" width="38.00" height="35.47" viewBox="0 0 30 28"><path fill="#d9d9e5" d="M15 0.2L19.3 9.3L29.5 10.7L22.1 17.8L23.9 28L15 23.2L6.1 28L7.9 17.8L0.5 10.7L10.7 9.3Z" stroke="#d9d9e5" stroke-width="1" stroke-linejoin="round"/></svg>
<div class="r" style="left:2740.90px;top:1666.30px;width:6.20px;height:6.20px;border-radius:50%;background:#8c8ea6"></div>
<div class="r" style="left:2740.90px;top:1678.40px;width:6.20px;height:6.20px;border-radius:50%;background:#8c8ea6"></div>
<div class="r" style="left:2740.90px;top:1690.50px;width:6.20px;height:6.20px;border-radius:50%;background:#8c8ea6"></div>
<svg class="r" style="left:85.00px;top:1764.00px;" width="60.00" height="60.00" viewBox="0 0 60 60"><g fill="none" stroke="#de3d88" stroke-width="2.90" stroke-linecap="butt" stroke-linejoin="round"><circle cx="30.8" cy="20.3" r="3.4"/><circle cx="18.9" cy="40.6" r="3.4"/><circle cx="42.7" cy="40.6" r="3.4"/><path d="M24.9 28.3A10.1 10.1 0 1 1 40.6 23"/><path d="M16.5 30.4A10.2 10.2 0 1 0 28.7 40.6H39.3"/><path d="M37.7 31.8A10.2 10.2 0 1 1 35.2 47.6"/><path d="M32.5 23.3L37.7 31.8"/><path d="M24.9 28.3L20.6 37.6"/></g></svg>
<div id="t59" class="t" style="left:172.50px;top:1743.51px;font-size:29.40px;color:#3273d0;font-weight:700;letter-spacing:0.544px;">name98671759898485031idp_...</div>
<div id="t60" class="t" style="left:172.07px;top:1786.10px;font-size:25.40px;color:#6b6d85;transform:scaleX(0.9651);transform-origin:0 0;">ID:</div>
<div id="t61" class="t" style="left:173.00px;top:1822.30px;font-size:25.40px;color:#6b6d85;letter-spacing:-0.122px;">name98671759898485031idp_ui_au...</div>
<svg class="r" style="left:615.90px;top:1807.00px;" width="22.00" height="22.00" viewBox="0 0 22 22"><g fill="none" stroke="#383946" stroke-width="1.80"><path d="M5.6 5.5H2.2q-1.4 0-1.4 1.4V19.7q0 1.4 1.4 1.4H14.2q1.4 0 1.4-1.4V16.2"/><rect x="6.4" y="0.8" width="14.8" height="14.8" rx="1.6"/></g></svg>
<div id="t62" class="t" style="left:655.90px;top:1779.64px;font-size:27.60px;color:#6b6d85;letter-spacing:-0.173px;">No Scorecard available</div>
<svg class="r" style="left:1433.70px;top:1780.00px;" width="28.00" height="28.00" viewBox="0 0 28 28"><circle cx="14" cy="14" r="12.7" fill="none" stroke="#aaaabf" stroke-width="2.3"/><path d="M9.6 11q0.6-3.7 4.6-3.7q3.9 0 3.9 3.5q0 2.4-2.6 3.6q-1.6 0.8-1.6 2.8v0.6" fill="none" stroke="#aaaabf" stroke-width="2.2" stroke-linecap="round"/><circle cx="14" cy="21.3" r="1.3" fill="#aaaabf"/></svg>
<div id="t63" class="t" style="left:1485.90px;top:1779.00px;font-size:29.30px;color:#0b0b0d;letter-spacing:-0.196px;">owner1...</div>
<div class="r" style="left:1684.00px;top:1794.20px;width:8.80px;height:2.20px;background:#0b0b0d"></div>
<div class="r" style="left:1697.10px;top:1794.20px;width:8.80px;height:2.20px;background:#0b0b0d"></div>
<div class="r" style="left:1912.20px;top:1794.20px;width:8.80px;height:2.20px;background:#383946"></div>
<div class="r" style="left:1924.90px;top:1794.20px;width:8.90px;height:2.20px;background:#383946"></div>
<div class="r" style="left:2236.80px;top:1771.50px;width:191.90px;height:45.00px;background:#f3f3fa;border:1.5px solid #d9dae5;border-radius:7px;box-sizing:border-box"></div>
<svg class="r" style="left:2254.50px;top:1781.00px;" width="24.00" height="25.00" viewBox="0 0 28 29"><g fill="none" stroke="#142d60" stroke-width="1.70" stroke-linejoin="round"><path d="M13.8 1.4L1 9.3L13.8 15.6L26.6 9.3Z"/><path d="M4.6 18.8L1.3 21L13.8 27.5L26.4 21L23 18.8"/></g><path fill="#142d60" stroke="#142d60" stroke-width="1" stroke-linejoin="round" d="M1.3 15L4.9 11.8L13.8 15.9L22.8 11.8L26.4 15L13.8 22.2Z"/></svg>
<div id="t64" class="t" style="left:2290.00px;top:1780.38px;font-size:25.30px;color:#142d60;font-weight:700;transform:scaleX(0.9526);transform-origin:0 0;">ACCOUNT</div>
<svg class="r" style="left:2672.80px;top:1776.00px;" width="38.00" height="35.47" viewBox="0 0 30 28"><path fill="#d9d9e5" d="M15 0.2L19.3 9.3L29.5 10.7L22.1 17.8L23.9 28L15 23.2L6.1 28L7.9 17.8L0.5 10.7L10.7 9.3Z" stroke="#d9d9e5" stroke-width="1" stroke-linejoin="round"/></svg>
<div class="r" style="left:2740.90px;top:1780.30px;width:6.20px;height:6.20px;border-radius:50%;background:#8c8ea6"></div>
<div class="r" style="left:2740.90px;top:1792.40px;width:6.20px;height:6.20px;border-radius:50%;background:#8c8ea6"></div>
<div class="r" style="left:2740.90px;top:1804.50px;width:6.20px;height:6.20px;border-radius:50%;background:#8c8ea6"></div>
<svg class="r" style="left:85.00px;top:1878.00px;" width="60.00" height="60.00" viewBox="0 0 60 60"><g fill="none" stroke="#de3d88" stroke-width="2.90" stroke-linecap="butt" stroke-linejoin="round"><circle cx="30.8" cy="20.3" r="3.4"/><circle cx="18.9" cy="40.6" r="3.4"/><circle cx="42.7" cy="40.6" r="3.4"/><path d="M24.9 28.3A10.1 10.1 0 1 1 40.6 23"/><path d="M16.5 30.4A10.2 10.2 0 1 0 28.7 40.6H39.3"/><path d="M37.7 31.8A10.2 10.2 0 1 1 35.2 47.6"/><path d="M32.5 23.3L37.7 31.8"/><path d="M24.9 28.3L20.6 37.6"/></g></svg>
<div id="t65" class="t" style="left:172.50px;top:1857.51px;font-size:29.40px;color:#3273d0;font-weight:700;letter-spacing:0.547px;">name9991759466477325idp_ui...</div>
<div id="t66" class="t" style="left:172.07px;top:1900.10px;font-size:25.40px;color:#6b6d85;transform:scaleX(0.9651);transform-origin:0 0;">ID:</div>
<div id="t67" class="t" style="left:173.00px;top:1936.30px;font-size:25.40px;color:#6b6d85;letter-spacing:-0.023px;">name9991759466477325idp_ui_aut...</div>
<svg class="r" style="left:612.90px;top:1921.00px;" width="22.00" height="22.00" viewBox="0 0 22 22"><g fill="none" stroke="#383946" stroke-width="1.80"><path d="M5.6 5.5H2.2q-1.4 0-1.4 1.4V19.7q0 1.4 1.4 1.4H14.2q1.4 0 1.4-1.4V16.2"/><rect x="6.4" y="0.8" width="14.8" height="14.8" rx="1.6"/></g></svg>
<div id="t68" class="t" style="left:655.90px;top:1893.64px;font-size:27.60px;color:#6b6d85;letter-spacing:-0.173px;">No Scorecard available</div>
<svg class="r" style="left:1433.70px;top:1894.00px;" width="28.00" height="28.00" viewBox="0 0 28 28"><circle cx="14" cy="14" r="12.7" fill="none" stroke="#aaaabf" stroke-width="2.3"/><path d="M9.6 11q0.6-3.7 4.6-3.7q3.9 0 3.9 3.5q0 2.4-2.6 3.6q-1.6 0.8-1.6 2.8v0.6" fill="none" stroke="#aaaabf" stroke-width="2.2" stroke-linecap="round"/><circle cx="14" cy="21.3" r="1.3" fill="#aaaabf"/></svg>
<div id="t69" class="t" style="left:1485.90px;top:1893.00px;font-size:29.30px;color:#0b0b0d;letter-spacing:0.392px;">owner6...</div>
<div class="r" style="left:1684.00px;top:1908.20px;width:8.80px;height:2.20px;background:#0b0b0d"></div>
<div class="r" style="left:1697.10px;top:1908.20px;width:8.80px;height:2.20px;background:#0b0b0d"></div>
<div class="r" style="left:1912.20px;top:1908.20px;width:8.80px;height:2.20px;background:#383946"></div>
<div class="r" style="left:1924.90px;top:1908.20px;width:8.90px;height:2.20px;background:#383946"></div>
<div class="r" style="left:2236.80px;top:1885.50px;width:191.90px;height:45.00px;background:#f3f3fa;border:1.5px solid #d9dae5;border-radius:7px;box-sizing:border-box"></div>
<svg class="r" style="left:2254.50px;top:1895.00px;" width="24.00" height="25.00" viewBox="0 0 28 29"><g fill="none" stroke="#142d60" stroke-width="1.70" stroke-linejoin="round"><path d="M13.8 1.4L1 9.3L13.8 15.6L26.6 9.3Z"/><path d="M4.6 18.8L1.3 21L13.8 27.5L26.4 21L23 18.8"/></g><path fill="#142d60" stroke="#142d60" stroke-width="1" stroke-linejoin="round" d="M1.3 15L4.9 11.8L13.8 15.9L22.8 11.8L26.4 15L13.8 22.2Z"/></svg>
<div id="t70" class="t" style="left:2290.00px;top:1894.38px;font-size:25.30px;color:#142d60;font-weight:700;transform:scaleX(0.9526);transform-origin:0 0;">ACCOUNT</div>
<svg class="r" style="left:2672.80px;top:1890.00px;" width="38.00" height="35.47" viewBox="0 0 30 28"><path fill="#d9d9e5" d="M15 0.2L19.3 9.3L29.5 10.7L22.1 17.8L23.9 28L15 23.2L6.1 28L7.9 17.8L0.5 10.7L10.7 9.3Z" stroke="#d9d9e5" stroke-width="1" stroke-linejoin="round"/></svg>
<div class="r" style="left:2740.90px;top:1894.30px;width:6.20px;height:6.20px;border-radius:50%;background:#8c8ea6"></div>
<div class="r" style="left:2740.90px;top:1906.40px;width:6.20px;height:6.20px;border-radius:50%;background:#8c8ea6"></div>
<div class="r" style="left:2740.90px;top:1918.50px;width:6.20px;height:6.20px;border-radius:50%;background:#8c8ea6"></div>
</body></html>
